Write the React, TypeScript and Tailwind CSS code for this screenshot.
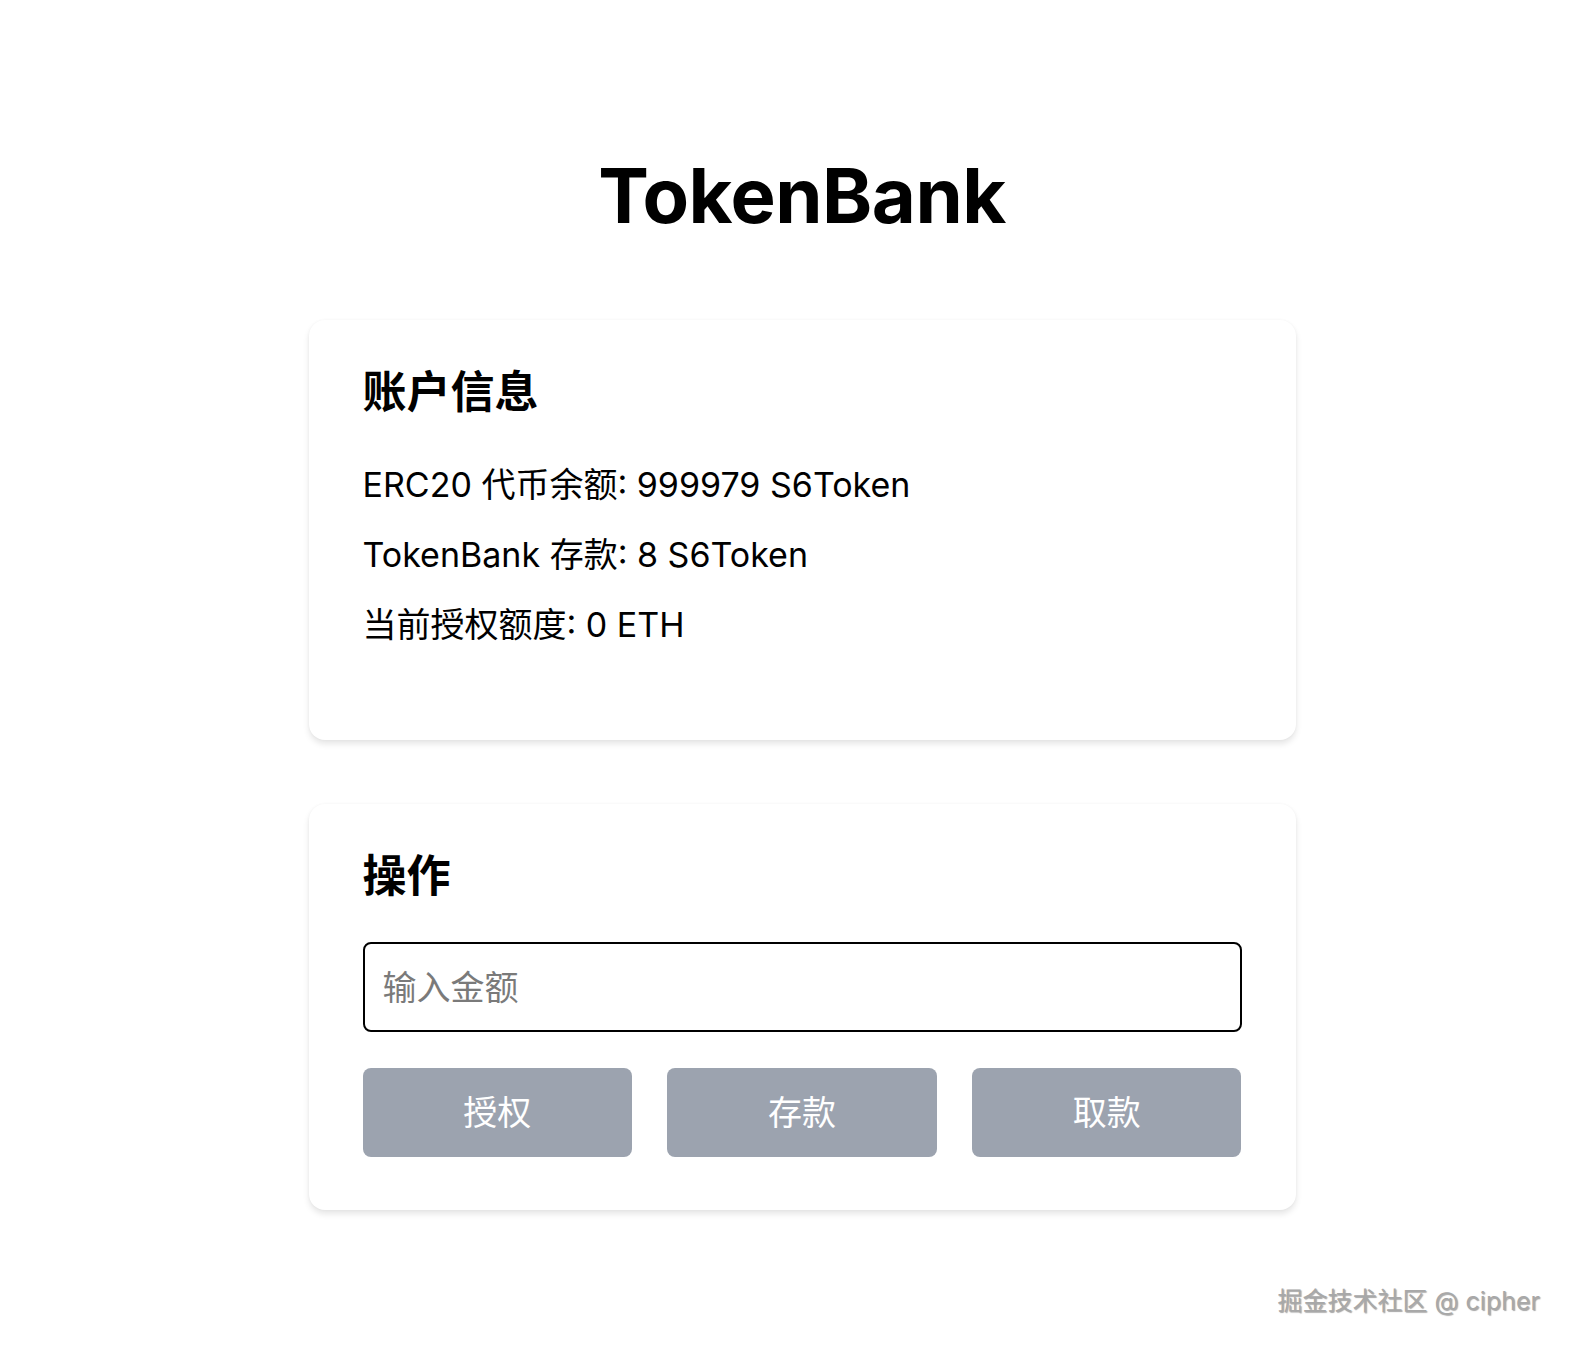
import { useState } from "react";

const latin = "font-['Inter','Noto_Sans_CJK_SC',sans-serif]";

const stats = [
    { label: "ERC20 代币余额", value: "999979 S6Token" },
    { label: "TokenBank 存款", value: "8 S6Token" },
    { label: "当前授权额度", value: "0 ETH" },
];

const actions = ["授权", "存款", "取款"];

function Card({ title, children, className = "" }: { title: string; children: React.ReactNode; className?: string }) {
    return (
        <section className={`w-[987px] rounded-2xl bg-white px-[54px] pt-[40px] shadow-[0_4px_6px_rgba(0,0,0,0.1),0_0_3px_rgba(0,0,0,0.04)] ${className}`}>
            <h2 className="text-[44px] font-bold leading-[64px] text-black">{title}</h2>
            {children}
        </section>
    );
}

export default function App() {
    const [amount, setAmount] = useState("");

    return (
        <div className={`relative min-h-[1352px] bg-white text-black ${latin}`}>
            <main className="flex flex-col items-center pl-[28px] pt-[150px]">
                <h1 className="text-[76px] font-bold leading-[90px] tracking-[-0.5px]">TokenBank</h1>

                <Card title="账户信息" className="mt-[80px] pb-[80px]">
                    <div className="mt-[26px] flex flex-col">
                        {stats.map((s) => (
                            <p key={s.label} className="text-[34px] leading-[70px]">
                                {s.label}: {s.value}
                            </p>
                        ))}
                    </div>
                </Card>

                <Card title="操作" className="mt-[64px] pb-[53px]">
                    <input
                        value={amount}
                        onChange={(e) => setAmount(e.target.value)}
                        placeholder="输入金额"
                        className="mt-[34px] block h-[90px] w-full rounded-lg border-2 border-black px-[18px] text-[34px] outline-none placeholder:text-[#7a7a7a]"
                    />
                    <div className="mt-[36px] grid grid-cols-3 gap-[35px]">
                        {actions.map((a) => (
                            <button
                                key={a}
                                disabled
                                className="h-[89px] rounded-lg bg-[#9ca3af] text-[34px] text-white"
                            >
                                {a}
                            </button>
                        ))}
                    </div>
                </Card>
            </main>

            <div className="absolute right-[36px] top-[1283px] text-[25px] leading-[36px] text-[#a8a8a8] [text-shadow:1px_1px_1px_rgba(0,0,0,0.35)]">
                掘金技术社区 @ cipher
            </div>
        </div>
    );
}
